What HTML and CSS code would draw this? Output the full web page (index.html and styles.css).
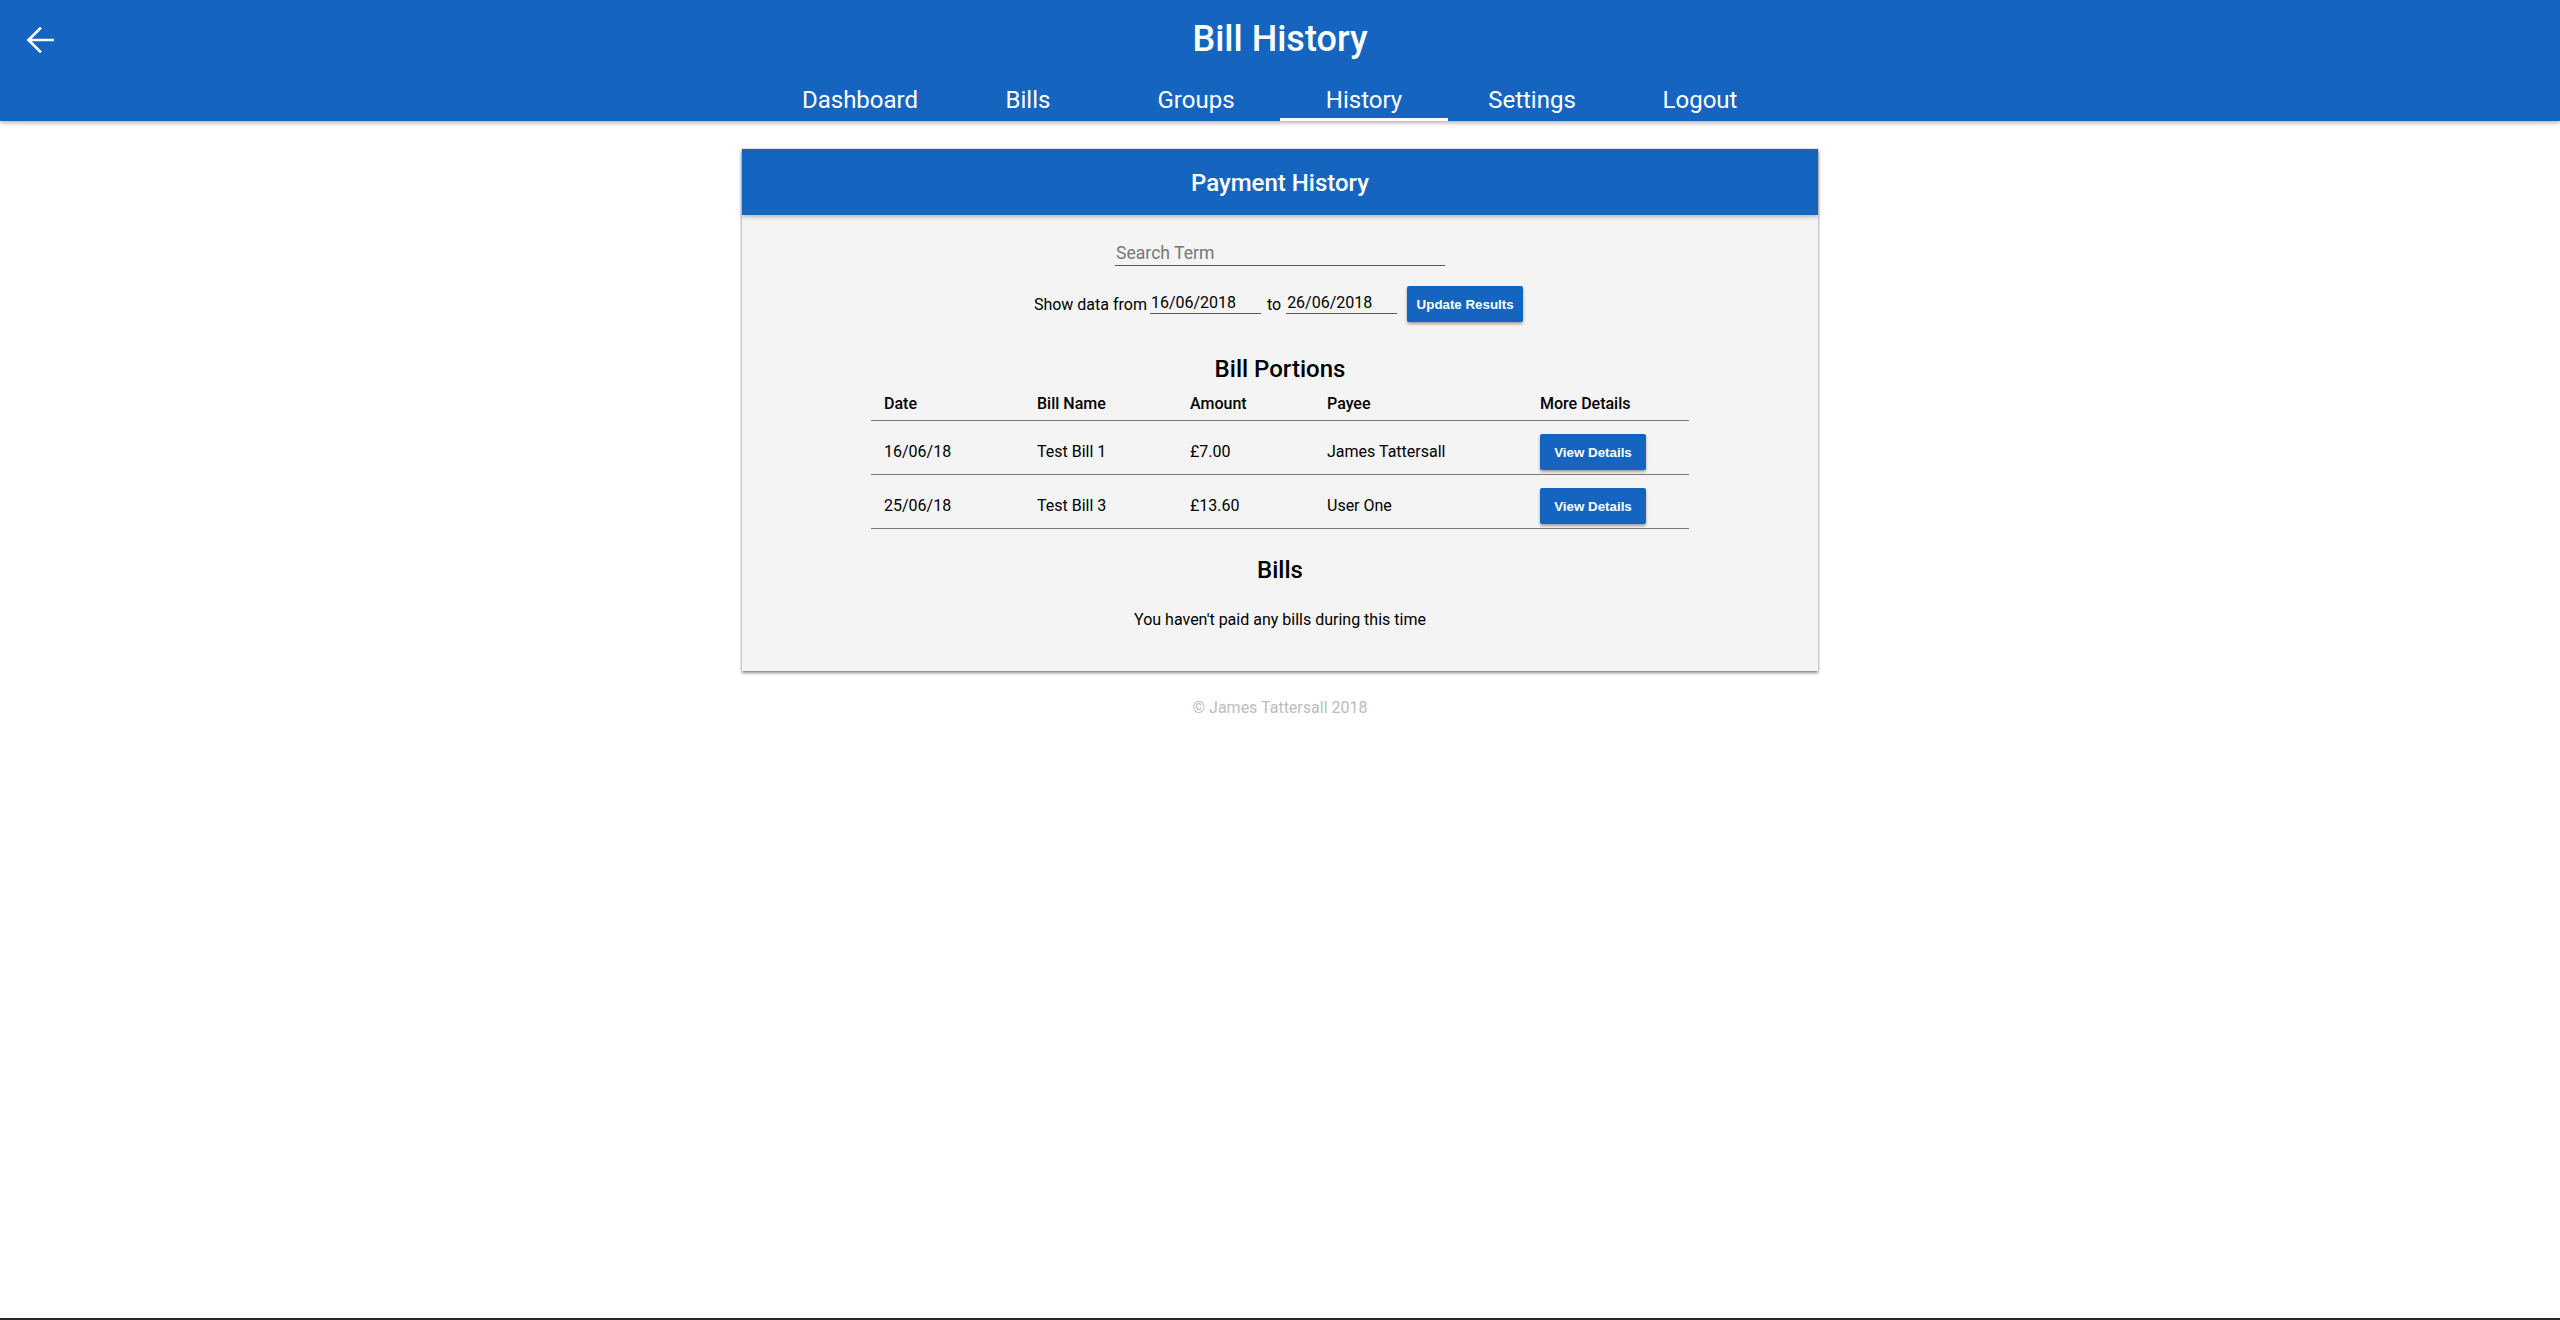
FILE: index.html
```html
<!DOCTYPE html>
<html lang="en">
<head>
<meta charset="utf-8">
<title>Bill History</title>
<link rel="stylesheet" href="styles.css">
</head>
<body>
<div class="page">
  <header class="app-bar">
    <div class="title-row">
      <div class="back">
        <svg class="back-icon" viewBox="0 0 28 26" width="28" height="26">
          <path d="M27 13H2.5M14 1.5L2.5 13L14 24.5" fill="none" stroke="#fff" stroke-width="2.6" stroke-linecap="square" stroke-linejoin="miter"/>
        </svg>
      </div>
      <h1 class="app-title">Bill History</h1>
      <div class="spacer"></div>
    </div>
    <nav class="tabs">
      <a class="tab">Dashboard</a>
      <a class="tab">Bills</a>
      <a class="tab">Groups</a>
      <a class="tab active">History</a>
      <a class="tab">Settings</a>
      <a class="tab">Logout</a>
    </nav>
  </header>

  <main class="main">
    <section class="card">
      <div class="card-header">Payment History</div>
      <div class="card-body">
        <input class="search" type="text" placeholder="Search Term">
        <div class="date-row">
          <span class="label">Show data from</span>
          <input class="date" type="text" value="16/06/2018">
          <span class="to">to</span>
          <input class="date" type="text" value="26/06/2018">
          <button class="btn update">Update Results</button>
        </div>

        <h2 class="section-title first">Bill Portions</h2>
        <table class="portions">
          <thead>
            <tr>
              <th class="c-date">Date</th>
              <th class="c-name">Bill Name</th>
              <th class="c-amount">Amount</th>
              <th class="c-payee">Payee</th>
              <th class="c-more">More Details</th>
            </tr>
          </thead>
          <tbody>
            <tr>
              <td>16/06/18</td>
              <td>Test Bill 1</td>
              <td>£7.00</td>
              <td>James Tattersall</td>
              <td><button class="btn view">View Details</button></td>
            </tr>
            <tr>
              <td>25/06/18</td>
              <td>Test Bill 3</td>
              <td>£13.60</td>
              <td>User One</td>
              <td><button class="btn view">View Details</button></td>
            </tr>
          </tbody>
        </table>

        <h2 class="section-title second">Bills</h2>
        <p class="empty">You haven't paid any bills during this time</p>
      </div>
    </section>
    <footer class="footer">© James Tattersall 2018</footer>
  </main>
</div>
</body>
</html>
```

FILE: styles.css
```css
* { box-sizing: border-box; }

html, body {
  margin: 0;
  padding: 0;
  background: #fff;
  font-family: Roboto, "Liberation Sans", Arial, sans-serif;
  color: #000;
}

.page {
  min-height: 1320px;
  border-bottom: 2px solid #262626;
}

.app-bar {
  background: #1565c0;
  color: #fff;
  height: 121px;
  padding-top: 21px;
  box-shadow: 0 2px 4px rgba(0, 0, 0, 0.3);
  position: relative;
  z-index: 2;
}

.title-row {
  display: grid;
  grid-template-columns: 1fr auto 1fr;
  align-items: center;
  height: 36px;
}

.back {
  padding-left: 26px;
  display: flex;
  align-items: center;
  padding-top: 2px;
}

.back-icon { display: block; }

.app-title {
  margin: 0;
  font-size: 36px;
  line-height: 36px;
  font-weight: 500;
  text-align: center;
}

.tabs {
  display: flex;
  justify-content: center;
  margin-top: 22px;
}

.tab {
  width: 168px;
  height: 42px;
  padding-top: 3px;
  border-bottom: 3px solid transparent;
  display: flex;
  align-items: center;
  justify-content: center;
  font-size: 24px;
  font-weight: 400;
  color: #fff;
}

.tab.active { border-bottom-color: #fff; }

.main {
  display: flex;
  flex-direction: column;
  align-items: center;
  padding-top: 28px;
}

.card {
  width: 1076px;
  background: #f4f4f4;
  box-shadow: 0 2px 3px rgba(0, 0, 0, 0.45), 0 0 2px rgba(0, 0, 0, 0.2);
}

.card-header {
  height: 66px;
  background: #1565c0;
  color: #fff;
  font-size: 24px;
  font-weight: 500;
  display: flex;
  align-items: center;
  justify-content: center;
  padding-top: 2px;
  box-shadow: 0 2px 4px rgba(0, 0, 0, 0.25);
  position: relative;
}

.card-body {
  display: flex;
  flex-direction: column;
  align-items: center;
  padding: 25px 0 41px;
}

.search {
  width: 330px;
  height: 26px;
  border: none;
  border-bottom: 1px solid #5a5a5a;
  background: transparent;
  font-family: Roboto, sans-serif;
  font-size: 17.6px;
  padding: 0 1px;
  color: #000;
  outline: none;
}

.search::placeholder { color: #777; }

.date-row {
  display: flex;
  align-items: center;
  margin-top: 20px;
  height: 36px;
  font-size: 16px;
  margin-left: -3px;
}

.label { margin-right: 3px; }

.date {
  width: 111px;
  height: 23px;
  margin-bottom: 3px;
  border: none;
  border-bottom: 1px solid #5a5a5a;
  background: transparent;
  font-family: Roboto, sans-serif;
  font-size: 16px;
  padding: 1px 1px 0;
  color: #000;
  outline: none;
}

.to { margin: 0 5px 0 6px; }

.btn {
  background: #1565c0;
  color: #fff;
  border: none;
  border-radius: 2px;
  font-family: "Liberation Sans", Arial, sans-serif;
  font-weight: 700;
  font-size: 13.33px;
  height: 36px;
  padding: 0;
  box-shadow: 0 2px 3px rgba(0, 0, 0, 0.35);
}

.update {
  width: 116px;
  margin-left: 10px;
}

.view {
  width: 106px;
  display: block;
}

.section-title {
  margin: 0;
  font-size: 24px;
  line-height: 28px;
  font-weight: 500;
}

.section-title.first { margin-top: 33px; }
.section-title.second { margin-top: 27px; }

.portions {
  width: 818px;
  border-collapse: collapse;
  margin-top: 2px;
  font-size: 16px;
}

.portions th {
  text-align: left;
  font-weight: 500;
  line-height: 20px;
  padding: 9px 13px 6px;
  border-bottom: 1px solid #7a7a7a;
}

.portions td {
  text-align: left;
  padding: 13px 13px 4px;
  height: 54px;
  border-bottom: 1px solid #7a7a7a;
  vertical-align: middle;
  line-height: 20px;
}

.portions td:not(:last-child) {
  vertical-align: top;
  padding-top: 21px;
  padding-bottom: 4px;
}

.c-date { width: 153px; }
.c-name { width: 153px; }
.c-amount { width: 137px; }
.c-payee { width: 213px; }
.c-more { width: 162px; }

.empty {
  margin: 26px 0 0;
  font-size: 16px;
  line-height: 20px;
}

.footer {
  margin-top: 27px;
  font-size: 16px;
  line-height: 20px;
  color: #bdbdbd;
}
```
